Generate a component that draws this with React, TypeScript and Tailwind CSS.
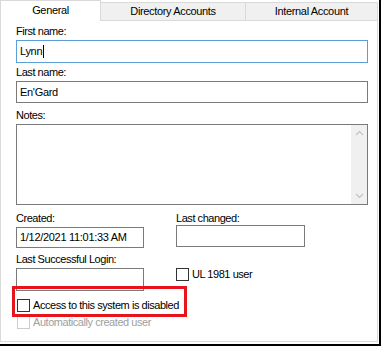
import React from "react";

const font = { fontFamily: '"Liberation Sans", Arial, sans-serif' };

function Label({ children, className = "" }: { children: React.ReactNode; className?: string }) {
  return <div className={`h-[14px] leading-[14px] text-[11px] tracking-[-0.45px] text-black ${className}`}>{children}</div>;
}

function Box({ className = "", children }: { className?: string; children?: React.ReactNode }) {
  return (
    <div className={`border border-[#7a7a7a] bg-white flex items-center pl-[3px] text-[11px] tracking-[-0.3px] text-black ${className}`}>
      {children}
    </div>
  );
}

function Check({ disabled = false }: { disabled?: boolean }) {
  return (
    <div
      className={`w-[13px] h-[13px] border bg-white shrink-0 ${disabled ? "border-[#cccccc]" : "border-[#333333]"}`}
    />
  );
}

export default function App() {
  return (
    <div
      className="w-[381px] h-[346px] bg-white border-r-2 border-b-2 border-black overflow-hidden"
      style={font}
    >
      {/* tabs */}
      <div className="flex h-[21px] items-end relative z-10">
        <div className="w-[101px] h-[21px] bg-white border-l border-t border-r border-[#d9d9d9] flex items-center justify-center text-[11px] tracking-[-0.35px] text-black pb-[1px]">
          General
        </div>
        <div className="w-[145px] h-[19px] bg-[#f0f0f0] border-t border-r border-b border-[#d9d9d9] flex items-center justify-center text-[11px] tracking-[-0.35px] text-black">
          Directory Accounts
        </div>
        <div className="w-[132px] h-[19px] bg-[#f0f0f0] border-t border-r border-b border-[#d9d9d9] flex items-center justify-center text-[11px] tracking-[-0.35px] text-black">
          Internal Account
        </div>
      </div>
      {/* panel */}
      <div className="relative w-[378px] h-[322px] -mt-[1px] border border-[#d9d9d9] border-t-0 bg-white pl-[15px]">
        <div className="h-[4px]" />
        <Label>First name:</Label>
        <div className="w-[352px] h-[23px] mt-[2px] border border-[#5c9fd8] bg-white flex items-center pl-[3px] text-[11px] tracking-[-0.3px] text-black">
          Lynn<span className="inline-block w-[1px] h-[13px] bg-black ml-[1px]" />
        </div>
        <Label className="mt-[2px]">Last name:</Label>
        <Box className="w-[352px] h-[22px] mt-[2px]">En'Gard</Box>
        <Label className="mt-[5px]">Notes:</Label>
        <div className="w-[352px] h-[81px] mt-[2px] border border-[#7a7a7a] bg-white flex justify-end">
          <div className="w-[16px] h-full bg-[#f0f0f0] flex flex-col items-center justify-between py-[5px]">
            <svg width="9" height="6" viewBox="0 0 9 6">
              <path d="M1 5 L4.5 1.5 L8 5" fill="none" stroke="#c2c2c2" strokeWidth="1.2" />
            </svg>
            <svg width="9" height="6" viewBox="0 0 9 6">
              <path d="M1 1 L4.5 4.5 L8 1" fill="none" stroke="#c2c2c2" strokeWidth="1.2" />
            </svg>
          </div>
        </div>
        <div className="flex mt-[6px]">
          <div className="w-[160px]">
            <Label>Created:</Label>
            <Box className="w-[128px] h-[21px] mt-[2px]">1/12/2021 11:01:33 AM</Box>
            <Label className="mt-[4px]">Last Successful Login:</Label>
            <Box className="w-[128px] h-[23px] mt-[2px]" />
          </div>
          <div>
            <Label>Last changed:</Label>
            <Box className="w-[129px] h-[22px] mt-[0px]" />
            <div className="flex items-center gap-[3px] mt-[20px]">
              <Check />
              <span className="text-[11px] tracking-[-0.45px] text-black leading-[14px]">UL 1981 user</span>
            </div>
          </div>
        </div>
        <div className="flex items-center gap-[3px] mt-[7px] ml-[1px]">
          <Check />
          <span className="text-[11px] tracking-[-0.45px] text-black leading-[14px]">Access to this system is disabled</span>
        </div>
        <div className="flex items-center gap-[3px] mt-[3px] ml-[1px]">
          <Check disabled />
          <span className="text-[11px] tracking-[-0.45px] text-[#a0a0a0] leading-[14px]">Automatically created user</span>
        </div>
        {/* red highlight */}
        <div className="absolute left-[11px] top-[266px] w-[175px] h-[31px] border-[3px] border-[#e8141b] pointer-events-none" />
      </div>
    </div>
  );
}
